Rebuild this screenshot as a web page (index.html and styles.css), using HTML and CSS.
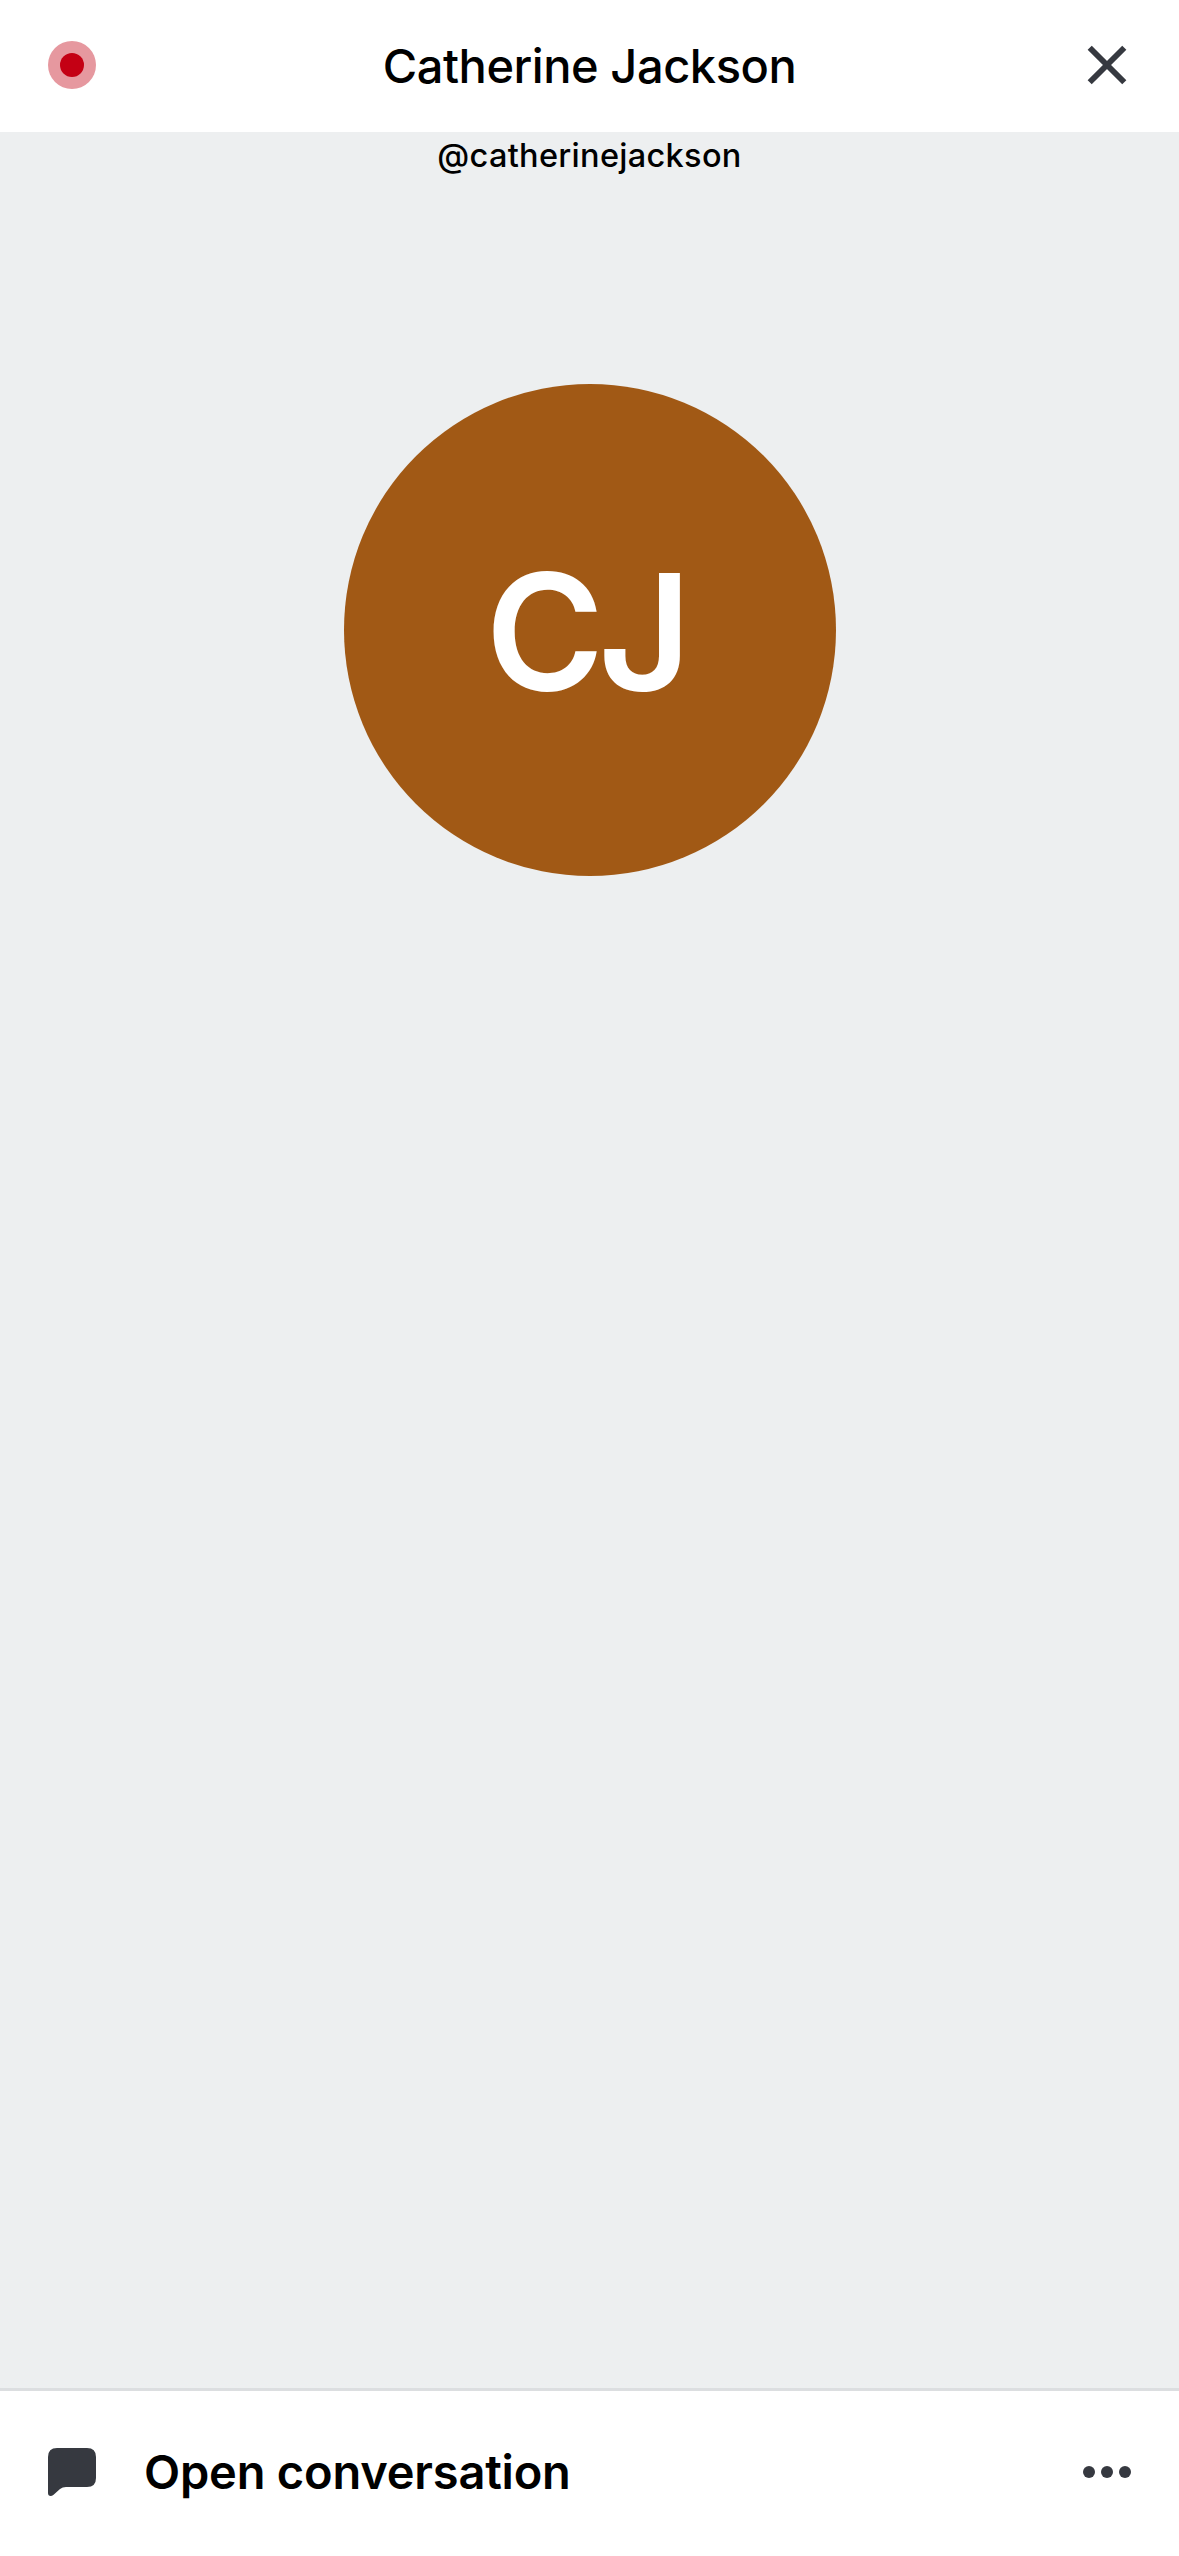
FILE: index.html
```
<!DOCTYPE html>
<html lang="en">
<head>
<meta charset="utf-8">
<title>Catherine Jackson</title>
<link rel="stylesheet" href="styles.css">
</head>
<body>
<header class="header">
  <svg class="status" viewBox="0 0 48 48"><circle cx="24" cy="24" r="24" fill="#e6989f"/><circle cx="24" cy="24" r="12" fill="#c40014"/></svg>
  <h1 class="title"><span class="title-text">Catherine Jackson</span></h1>
  <svg class="close" viewBox="0 0 48 48"><path d="M6.7 6.7L41.3 41.3M41.3 6.7L6.7 41.3" stroke="#363940" stroke-width="5.8" fill="none"/></svg>
</header>
<main class="profile">
  <p class="handle"><span class="handle-text">@catherinejackson</span></p>
  <div class="avatar"><span class="initials">CJ</span></div>
</main>
<footer class="footer">
  <svg class="chat" viewBox="0 0 48 48"><path d="M9 0H39Q48 0 48 9V30Q48 39 39 39H18Q14.5 39 12 41L5.3 47Q4 48 2.7 48Q0 48 0 45V9Q0 0 9 0Z" fill="#363940"/></svg>
  <span class="action">Open conversation</span>
  <svg class="more" viewBox="0 0 48 12"><circle cx="6" cy="6" r="6"/><circle cx="24" cy="6" r="6"/><circle cx="42" cy="6" r="6"/></svg>
</footer>
</body>
</html>
```
FILE: styles.css
```
* { box-sizing: border-box; }
body { margin: 0; height: 2556px; display: flex; flex-direction: column; background: #edeff0; color: #000; font-family: Inter, sans-serif; }
.header { height: 132px; padding: 0 48px 2px; background: #fff; display: flex; align-items: center; justify-content: space-between; }
.status { width: 48px; height: 48px; }
.title { margin: 0; padding-top: 1px; font-size: 47px; font-weight: 500; line-height: 60px; letter-spacing: -0.45px; }
.close { width: 48px; height: 48px; }
.profile { flex: 1; display: flex; flex-direction: column; align-items: center; }
.handle { margin: 0; font-size: 32.5px; font-weight: 500; line-height: 47px; letter-spacing: 0.3px; }
.avatar { margin-top: 205px; width: 492px; height: 492px; border-radius: 50%; background: #a15915; color: #fff; display: flex; align-items: center; justify-content: center; }
.initials { padding: 2px 8px 0 0; font-size: 161px; font-weight: 560; line-height: 1; letter-spacing: -6px; }
.footer { height: 168px; padding: 0 48px 3px; background: #fff; border-top: 3px solid #dcdee0; display: flex; align-items: center; }
.chat { width: 48px; height: 48px; margin-right: 48px; }
.action { font-size: 47px; font-weight: 600; line-height: 60px; letter-spacing: -0.2px; }
.more { width: 48px; height: 12px; margin-left: auto; fill: #363940; }
```
